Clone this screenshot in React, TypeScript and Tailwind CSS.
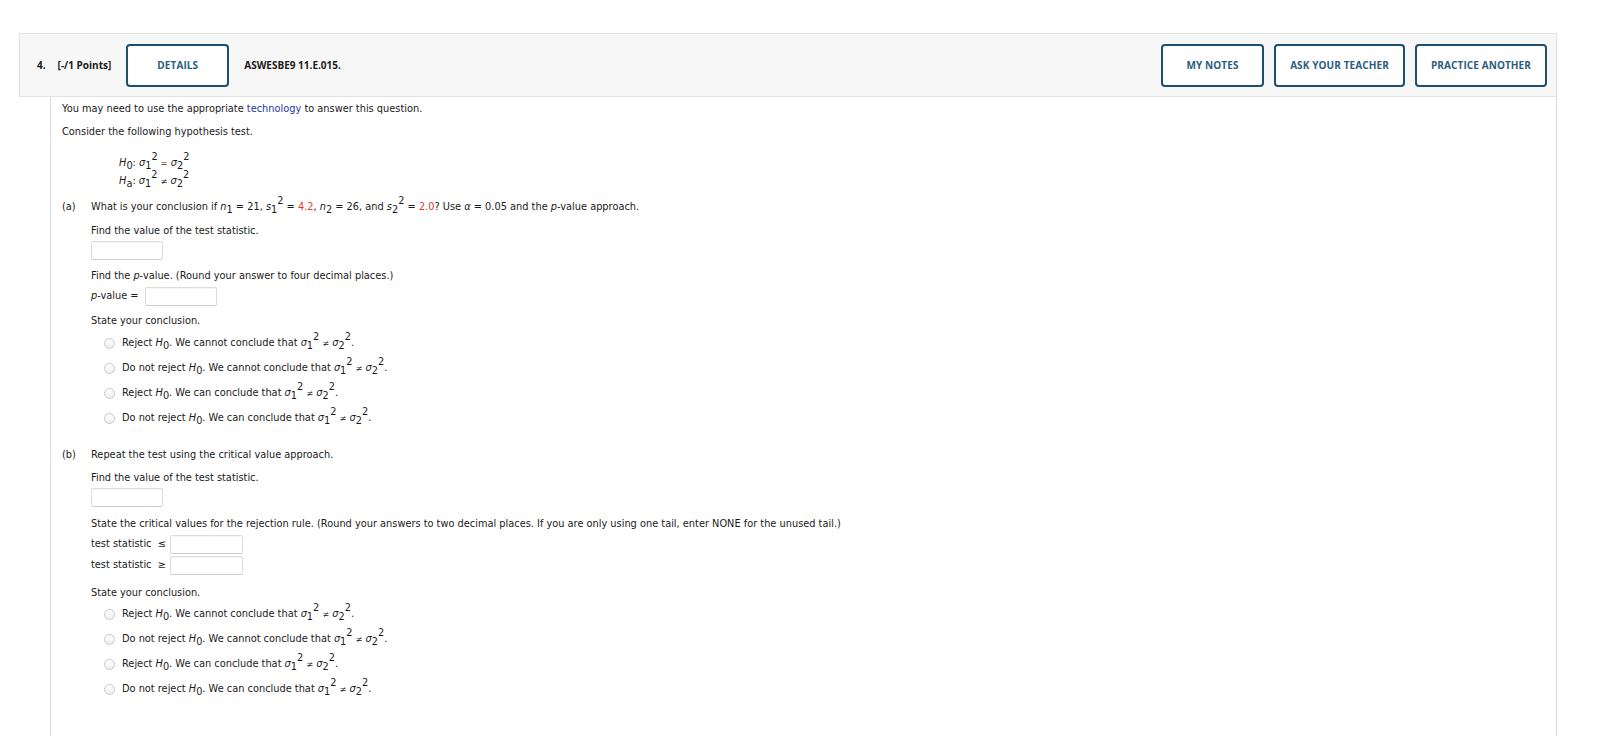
import type { ReactNode } from 'react';

const Sub = ({ children }: { children: ReactNode }) => (
  <span className="relative top-[3px]">{children}</span>
);
const Sup = ({ children }: { children: ReactNode }) => (
  <span className="relative top-[-6px]">{children}</span>
);
const I = ({ children }: { children: ReactNode }) => <span className="italic">{children}</span>;

const SigSq = ({ n }: { n: string }) => (
  <>
    <I>σ</I>
    <Sub>{n}</Sub>
    <Sup>2</Sup>
  </>
);

const NotEq = () => (
  <>
    <SigSq n="1" /> <span className="text-[8px]">≠</span> <SigSq n="2" />
  </>
);

const H0 = () => (
  <>
    <I>H</I>
    <Sub>0</Sub>
  </>
);

function Box({ w = 'w-[72px]' }: { w?: string }) {
  return <div className={`${w} h-[19px] border border-[#ddd] border-b-[#ccc] bg-white rounded-[2px] shadow-[inset_0_1px_1px_rgba(0,0,0,0.04)]`} />;
}

function HeaderButton({ label, width }: { label: string; width: string }) {
  return (
    <button
      className={`${width} h-[43px] border-2 border-[#1d4f70] rounded-[4px] bg-white text-[10px] font-bold text-[#2b5d7f] tracking-[0.1px]`}
    >
      {label}
    </button>
  );
}

const options = [
  { pre: 'Reject ', mid: '. We cannot conclude that ' },
  { pre: 'Do not reject ', mid: '. We cannot conclude that ' },
  { pre: 'Reject ', mid: '. We can conclude that ' },
  { pre: 'Do not reject ', mid: '. We can conclude that ' },
];

function Conclusion() {
  return (
    <div>
      {options.map((o, i) => (
        <div key={i} className="h-[25px] flex items-center">
          <span className="ml-[13px] w-[11px] h-[11px] rounded-full border border-[#c8c8c8] bg-gradient-to-b from-white to-[#eee]" />
          <span className="ml-[7px]">
            {o.pre}
            <H0 />
            {o.mid}
            <NotEq />.
          </span>
        </div>
      ))}
    </div>
  );
}

export default function App() {
  return (
    <div className="w-[1600px] h-[736px] bg-white overflow-hidden pt-[33px] text-[#1a1a1a]" style={{ fontFamily: '"DejaVu Sans", Verdana, sans-serif' }}>
      {/* question header */}
      <div
        className="ml-[19px] w-[1538px] h-[64px] bg-[#f7f7f7] border border-[#e2e2e2] flex items-center pl-[17px] pr-[9px]"
        style={{ fontFamily: '"Open Sans", sans-serif' }}
      >
        <span className="text-[10px] font-bold">4.</span>
        <span className="ml-[12px] text-[10px] font-bold">[-/1 Points]</span>
        <div className="ml-[15px]">
          <HeaderButton label="DETAILS" width="w-[103px]" />
        </div>
        <span className="ml-[15px] text-[10px] font-bold">ASWESBE9 11.E.015.</span>
        <div className="ml-auto flex gap-[10px]">
          <HeaderButton label="MY NOTES" width="w-[103px]" />
          <HeaderButton label="ASK YOUR TEACHER" width="w-[131px]" />
          <HeaderButton label="PRACTICE ANOTHER" width="w-[132px]" />
        </div>
      </div>

      {/* question body */}
      <div className="ml-[50px] w-[1507px] h-[700px] border-l border-r border-[#dcdcdc] pl-[11px] pt-[5px] text-[9.8px] leading-[14px]">
        <p>
          You may need to use the appropriate <span className="text-[#2236a8]">technology</span> to answer this question.
        </p>
        <p className="mt-[9px]">Consider the following hypothesis test.</p>

        <div className="mt-[15px] ml-[57px]">
          <div className="h-[18px] leading-[18px]">
            <I>H</I>
            <Sub>0</Sub>: <SigSq n="1" /> <span className="text-[8px]">=</span> <SigSq n="2" />
          </div>
          <div className="h-[18px] leading-[18px]">
            <I>H</I>
            <Sub>a</Sub>: <NotEq />
          </div>
        </div>

        <div className="mt-[10px] flex">
          <span className="w-[29px]">(a)</span>
          <div>
            <p>
              What is your conclusion if <I>n</I>
              <Sub>1</Sub> = 21, <I>s</I>
              <Sub>1</Sub>
              <Sup>2</Sup> = <span className="text-[#e0392b]">4.2</span>, <I>n</I>
              <Sub>2</Sub> = 26, and <I>s</I>
              <Sub>2</Sub>
              <Sup>2</Sup> = <span className="text-[#e0392b]">2.0</span>? Use <I>α</I> = 0.05 and the <I>p</I>-value approach.
            </p>
            <p className="mt-[10px]">Find the value of the test statistic.</p>
            <div className="mt-[3px]">
              <Box />
            </div>
            <p className="mt-[9px]">
              Find the <I>p</I>-value. (Round your answer to four decimal places.)
            </p>
            <div className="mt-[4px] flex items-center h-[18px]">
              <span>
                <I>p</I>-value =
              </span>
              <div className="ml-[6px]">
                <Box />
              </div>
            </div>
            <p className="mt-[9px]">State your conclusion.</p>
            <div className="mt-[3px]">
              <Conclusion />
            </div>
          </div>
        </div>

        <div className="mt-[17px] flex">
          <span className="w-[29px]">(b)</span>
          <div>
            <p>Repeat the test using the critical value approach.</p>
            <p className="mt-[9px]">Find the value of the test statistic.</p>
            <div className="mt-[3px]">
              <Box />
            </div>
            <p className="mt-[10px]">
              State the critical values for the rejection rule. (Round your answers to two decimal places. If you are only using one tail, enter NONE for the unused tail.)
            </p>
            <div className="mt-[4px] flex items-center h-[18px]">
              <span className="w-[79px]">test statistic &nbsp;≤</span>
              <Box w="w-[73px]" />
            </div>
            <div className="mt-[3px] flex items-center h-[18px]">
              <span className="w-[79px]">test statistic &nbsp;≥</span>
              <Box w="w-[73px]" />
            </div>
            <p className="mt-[12px]">State your conclusion.</p>
            <div className="mt-[2px]">
              <Conclusion />
            </div>
          </div>
        </div>
      </div>
    </div>
  );
}
